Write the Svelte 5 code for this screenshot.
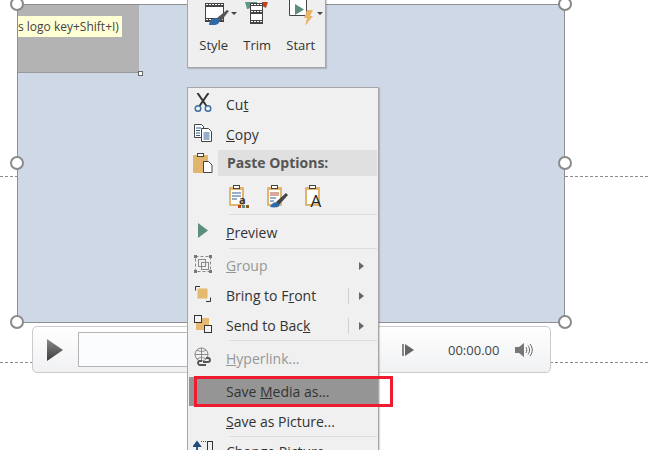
<script>
	// left column icons are drawn in the snippets below, rows come from this list
	const rows = [
		{ type: 'item', label: 'Cut', key: 2, icon: 'cut' },
		{ type: 'item', label: 'Copy', key: 0, icon: 'copy' },
		{ type: 'head', label: 'Paste Options:', icon: 'paste' },
		{ type: 'paste' },
		{ type: 'sep' },
		{ type: 'item', label: 'Preview', key: 0, icon: 'preview', tall: true },
		{ type: 'sep', tight: true },
		{ type: 'item', label: 'Group', key: 0, icon: 'group', disabled: true, arrow: true },
		{ type: 'item', label: 'Bring to Front', key: 10, icon: 'front', arrow: true, split: true },
		{ type: 'item', label: 'Send to Back', key: 11, icon: 'back', arrow: true, split: true },
		{ type: 'sep' },
		{ type: 'item', label: 'Hyperlink...', key: 0, icon: 'link', disabled: true },
		{ type: 'item', label: 'Save Media as...', key: 5, active: true },
		{ type: 'item', label: 'Save as Picture...', key: 0 },
		{ type: 'sep', flush: true },
		{ type: 'item', label: 'Change Picture', key: -1, icon: 'change' }
	];
</script>

{#snippet menuIcon(name)}
	{#if name === 'cut'}
		<svg width="20" height="20" viewBox="0 0 20 20" fill="none">
			<path d="M4.500 0l9 13M15.500 0L6.500 13" stroke="#333" stroke-width="2" />
			<circle cx="5" cy="15.500" r="2.800" stroke="#3b6ea5" stroke-width="1.400" />
			<circle cx="15" cy="15.500" r="2.800" stroke="#3b6ea5" stroke-width="1.400" />
		</svg>
	{:else if name === 'copy'}
		<svg width="20" height="20" viewBox="0 0 20 20" fill="#fff" stroke="#444">
			<path d="M1.500 1.500h7l2 2v11h-9z" />
			<path d="M8.500 5.500h7l3 3v10h-10z" />
			<path d="M3 5h5M3 7.500h4M3 10h4M3 12.500h4M10.500 10h6M10.500 12h6M10.500 14h6M10.500 16h6" stroke="#2f5f94" fill="none" />
		</svg>
	{:else if name === 'paste'}
		<svg width="22" height="22" viewBox="0 0 22 22">
			<rect x="1" y="3" width="15" height="18" rx="1" fill="#e2b56f" />
			<rect x="5.500" y="1.500" width="6" height="3" fill="#fff" stroke="#444" />
			<path d="M11.500 9.500h5l3.500 3.500v7.500h-8.500z" fill="#fff" stroke="#444" />
		</svg>
	{:else if name === 'preview'}
		<svg width="20" height="20" viewBox="0 0 20 20"><path d="M5 2l10 7.500L5 17z" fill="#5b8f7c" /></svg>
	{:else if name === 'group'}
		<svg width="20" height="20" viewBox="0 0 20 20" fill="none" stroke="#8a8a8a">
			<rect x="2.500" y="2.500" width="15" height="15" stroke-dasharray="3 2" />
			<rect x="5.500" y="5.500" width="7" height="7" />
			<rect x="8.500" y="8.500" width="7" height="7" />
			<path d="M1 1h3v3H1zM16 1h3v3h-3zM1 16h3v3H1zM16 16h3v3h-3z" fill="#777" stroke="none" />
		</svg>
	{:else if name === 'front'}
		<svg width="18" height="18" viewBox="0 0 18 18" fill="none">
			<path d="M1.500 5.500v-4h4.500M16.500 12.500v4H12" stroke="#333" />
			<rect x="3.500" y="3.500" width="10" height="10" fill="#e5b96f" />
		</svg>
	{:else if name === 'back'}
		<svg width="20" height="20" viewBox="0 0 20 20">
			<rect x="3" y="4" width="13" height="12" fill="#e5b96f" />
			<rect x="1.500" y="1.500" width="7" height="7" fill="#f4f4f4" stroke="#333" />
			<rect x="11.500" y="11.500" width="7" height="7" fill="#f4f4f4" stroke="#333" />
		</svg>
	{:else if name === 'link'}
		<svg width="20" height="20" viewBox="0 0 20 20" fill="none" stroke="#8a8a8a">
			<circle cx="8.500" cy="7.500" r="6.500" />
			<path d="M2 7.500h13M8.500 1v13M4 3c3 2 6 2 9 0M4 12c3-2 6-2 9 0" />
			<path d="M10 15h5a2 2 0 0 0 0-4h-2M13 18H7a2 2 0 0 1 0-4h2" stroke="#555" stroke-width="1.800" />
		</svg>
	{:else if name === 'change'}
		<svg width="20" height="20" viewBox="0 0 20 20" fill="none">
			<path d="M4 12V3M1 6l3-4 3 4z" stroke="#1f4e79" stroke-width="1.800" fill="#1f4e79" />
			<path d="M8 1.500h5" stroke="#444" stroke-dasharray="1 1" />
			<rect x="14.500" y="1.500" width="5" height="12" stroke="#333" />
		</svg>
	{/if}
{/snippet}

<main class="canvas">
	<div class="guide guide-top"></div>
	<div class="guide guide-bottom"></div>

	<section class="slide">
		<div class="shot">
			<span class="tip">s logo key+Shift+I)</span>
			<i class="crop-handle"></i>
		</div>
	</section>
	{#each [[17, 4], [565, 4], [17, 163], [565, 163], [17, 322], [565, 322]] as [x, y]}
		<i class="handle" style="left: {x}px; top: {y}px"></i>
	{/each}

	<div class="player">
		<svg class="play" width="18" height="24" viewBox="0 0 18 24">
			<defs>
				<linearGradient id="dark" x1="0" y1="0" x2="0" y2="1">
					<stop offset="0" stop-color="#8a8a8a" />
					<stop offset="1" stop-color="#3c3c3c" />
				</linearGradient>
			</defs>
			<path d="M1 1l16 11L1 23z" fill="url(#dark)" />
		</svg>
		<div class="track"></div>
		<svg class="step" width="12" height="14" viewBox="0 0 12 14">
			<path d="M0 1h2v12H0z" fill="#888" />
			<path d="M3 1l9 6-9 6z" fill="#666" />
		</svg>
		<span class="time">00:00.00</span>
		<svg class="volume" width="20" height="16" viewBox="0 0 20 16" fill="none">
			<path d="M0 5h4l5-4v14l-5-4H0z" fill="#777" />
			<path d="M11 5c1 2 1 4 0 6M13 3.500c2 3 2 6 0 9M15 2c3 4 3 8 0 12" stroke="#666" />
		</svg>
	</div>

	<div class="toolbar">
		<div class="tool">
			<svg width="46" height="30" viewBox="0 0 46 30">
				<rect x="14.500" y="3.500" width="18" height="18" fill="#fff" stroke="#444" />
				<path d="M14 3h19v4H14zM14 18h19v4H14z" fill="#444" />
				<path d="M15 4.500h17M15 19.500h17" stroke="#fff" stroke-dasharray="2 1" />
				<path d="M26 18l10-8 2 1-8 10z" fill="#555" />
				<path d="M18 25c0-5 6-8 10-6 2 2-1 6-4 6z" fill="#2f6aa8" />
				<path d="M40 12h6l-3 3z" fill="#444" />
			</svg>
			<span>Style</span>
		</div>
		<div class="tool">
			<svg width="46" height="30" viewBox="0 0 46 30">
				<path d="M11 2h12v3l-9 4h-1z" fill="#5b9a80" />
				<path d="M28 2h6l-2 6-4-2z" fill="#c0451f" />
				<rect x="16.500" y="3.500" width="12" height="20" fill="#fff" stroke="#444" />
				<path d="M16 3h13v3H16zM16 10h13v4H16zM16 20h13v4H16z" fill="#444" />
				<path d="M17 4.500h11M17 11.500h11M17 21.500h11" stroke="#fff" stroke-dasharray="2 1" />
			</svg>
			<span>Trim</span>
		</div>
		<div class="tool">
			<svg width="46" height="30" viewBox="0 0 46 30">
				<path d="M11.500 0v15.500h17V0" fill="#fff" stroke="#444" />
				<path d="M17 4l9 5.500-9 5.500z" fill="#5b8f7c" />
				<path d="M29 10h6l-3 6h3l-8 10 2-8h-3z" fill="#e8b565" />
				<path d="M39 12h6l-3 3z" fill="#444" />
			</svg>
			<span>Start</span>
		</div>
	</div>

	<div class="menu">
		{#each rows as row}
			{#if row.type === 'sep'}
				<div class="sep" class:tight={row.tight} class:flush={row.flush}></div>
			{:else if row.type === 'paste'}
				<div class="paste-row">
					<svg width="22" height="24" viewBox="0 0 22 24">
						<rect x="1" y="3" width="15" height="19" rx="1" fill="#e2b56f" />
						<rect x="3" y="6" width="11" height="14" fill="#fff" />
						<rect x="5.500" y="1.500" width="6" height="3" fill="#fff" stroke="#444" />
						<path d="M4 9h9M4 12h9M4 15h5" stroke="#2f5f94" />
						<text x="11" y="20" class="mini">a</text>
						<path d="M10 21h3v3h-3z" fill="#c0451f" /><path d="M14 21h3v3h-3z" fill="#5b8f7c" /><path d="M18 21h3v3h-3z" fill="#8a5a2b" />
					</svg>
					<svg width="22" height="24" viewBox="0 0 22 24">
						<rect x="1" y="3" width="15" height="19" rx="1" fill="#e2b56f" />
						<rect x="3" y="6" width="11" height="14" fill="#fff" />
						<rect x="5.500" y="1.500" width="6" height="3" fill="#fff" stroke="#444" />
						<path d="M4 9h9M4 11h9" stroke="#b5533c" /><path d="M4 14h6M4 17h4" stroke="#2f5f94" />
						<path d="M10 18l10-9 2 2-9 10z" fill="#444" /><path d="M4 23c2-5 7-6 9-3s-3 4-9 3z" fill="#2f6aa8" />
					</svg>
					<svg width="22" height="24" viewBox="0 0 22 24">
						<rect x="1" y="3" width="15" height="19" rx="1" fill="#e2b56f" />
						<rect x="3" y="6" width="11" height="14" fill="#fff" />
						<rect x="5.500" y="1.500" width="6" height="3" fill="#fff" stroke="#444" />
						<text x="6.500" y="23" class="big">A</text>
					</svg>
				</div>
			{:else}
				<div class="row" class:head={row.type === 'head'} class:tall={row.tall} class:disabled={row.disabled} class:active={row.active}>
					<span class="gutter">
						{#if row.icon}{@render menuIcon(row.icon)}{/if}
					</span>
					<span class="label">
						{#if row.key >= 0 && row.type === 'item'}
							{row.label.slice(0, row.key)}<u>{row.label[row.key]}</u>{row.label.slice(row.key + 1)}
						{:else}
							{row.label}
						{/if}
					</span>
					{#if row.arrow}
						<span class="arrow-box" class:split={row.split}><i class="arrow"></i></span>
					{/if}
				</div>
			{/if}
		{/each}
		<div class="highlight"></div>
	</div>
</main>

<style>
	:global(body) {
		background: #fff;
	}

	.canvas {
		position: relative;
		width: 648px;
		height: 450px;
		overflow: hidden;
		font-family: 'Open Sans', 'Noto Sans', sans-serif;
		color: #333;
	}

	.guide {
		position: absolute;
		left: 0;
		width: 648px;
		border-top: 1px dashed #8c8c8c;
	}
	.guide-top {
		top: 176px;
	}
	.guide-bottom {
		top: 362px;
	}

	.slide {
		position: absolute;
		left: 17px;
		top: 4px;
		width: 546px;
		height: 317px;
		background: #cfd8e6;
		border: 1px solid #8f8f8f;
	}

	.shot {
		position: relative;
		width: 121px;
		height: 67px;
		background: #b3b3b3;
		border-bottom: 1px solid #999;
	}

	.tip {
		position: absolute;
		left: 0;
		top: 11px;
		width: 104px;
		height: 21px;
		overflow: hidden;
		background: #ffffd6;
		font-size: 12px;
		line-height: 21px;
		white-space: nowrap;
		color: #444;
	}

	.crop-handle {
		position: absolute;
		right: -4px;
		bottom: -4px;
		width: 3px;
		height: 3px;
		background: #fff;
		border: 1px solid #666;
	}

	.handle {
		position: absolute;
		width: 10px;
		height: 10px;
		margin: -7px 0 0 -7px;
		background: #fff;
		border: 2px solid #8a8a8a;
		border-radius: 50%;
	}

	.player {
		position: absolute;
		left: 32px;
		top: 326px;
		width: 517px;
		height: 45px;
		display: flex;
		align-items: center;
		background: linear-gradient(#ffffff, #f0f1f3);
		border: 1px solid #cbcbcb;
		border-radius: 5px;
	}
	.play {
		margin-left: 13px;
	}
	.track {
		width: 290px;
		height: 33px;
		margin-left: 14px;
		background: #fbfcfd;
		border: 1px solid #b4b4b4;
	}
	.step {
		margin-left: 32px;
	}
	.time {
		margin-left: 34px;
		font-size: 13px;
		color: #444;
	}
	.volume {
		margin-left: 16px;
	}

	.toolbar {
		position: absolute;
		left: 187px;
		top: -6px;
		width: 139px;
		height: 74px;
		display: flex;
		box-sizing: border-box;
		padding: 6px 0 0 4px;
		background: #efefef;
		border: 1px solid #a6a6a6;
		border-top: none;
		box-shadow: 1px 1px 1px rgba(0, 0, 0, 0.15);
	}
	.tool {
		flex: none;
		width: 43.500px;
		display: flex;
		flex-direction: column;
		align-items: center;
		gap: 6px;
		font-size: 13px;
		line-height: 18px;
		color: #333;
	}

	.menu {
		position: absolute;
		left: 187px;
		top: 87px;
		width: 190px;
		padding-top: 2px;
		background: #f0f0f0;
		border: 1px solid #a6a6a6;
		box-shadow: 1px 1px 1px rgba(0, 0, 0, 0.15);
	}

	.row {
		display: flex;
		align-items: center;
		height: 30px;
		font-size: 14px;
		color: #333;
	}
	.row.tall {
		height: 31px;
		align-items: flex-start;
		line-height: 30px;
	}
	.gutter {
		width: 30px;
		height: 30px;
		flex: none;
		box-sizing: border-box;
		padding-bottom: 4px;
		display: flex;
		align-items: center;
		justify-content: center;
	}
	.label {
		margin-left: 8px;
		padding-bottom: 2px;
		flex: 1;
		white-space: nowrap;
	}
	.head {
		height: 26px;
		font-weight: 700;
		color: #555;
	}
	.head .gutter {
		height: 26px;
		padding-bottom: 0;
	}
	.head .label {
		background: #e0e0e0;
		line-height: 26px;
		margin-left: 0;
		padding: 0 0 0 9px;
		margin-right: 1px;
	}
	.disabled {
		color: #979797;
	}
	.active {
		margin-top: 3px;
		background: linear-gradient(#959595, #959595) 1px 0 / 189px 29px no-repeat;
	}

	.arrow-box {
		width: 30px;
		height: 16px;
		display: flex;
		align-items: center;
		justify-content: flex-end;
		padding-right: 14px;
		box-sizing: border-box;
	}
	.arrow-box.split {
		border-left: 1px solid #d0d0d0;
	}
	.arrow {
		border-left: 5px solid #666;
		border-top: 4px solid transparent;
		border-bottom: 4px solid transparent;
	}

	.sep {
		height: 1px;
		margin: -1px 1px 3px 41px;
		background: #dcdcdc;
	}
	.sep.tight {
		margin-bottom: 2px;
	}
	.sep.flush {
		margin-bottom: 0;
	}

	.paste-row {
		height: 39px;
		display: flex;
		align-items: center;
		gap: 16px;
		padding-left: 40px;
	}
	.paste-row svg {
		overflow: visible;
	}

	.mini {
		font-size: 11px;
		font-weight: 700;
		fill: #333;
	}
	.big {
		font-size: 17px;
		fill: #222;
	}

	.highlight {
		position: absolute;
		left: 6px;
		top: 288px;
		width: 199px;
		height: 31px;
		box-sizing: border-box;
		border: 3px solid #ee1c2e;
	}
</style>
